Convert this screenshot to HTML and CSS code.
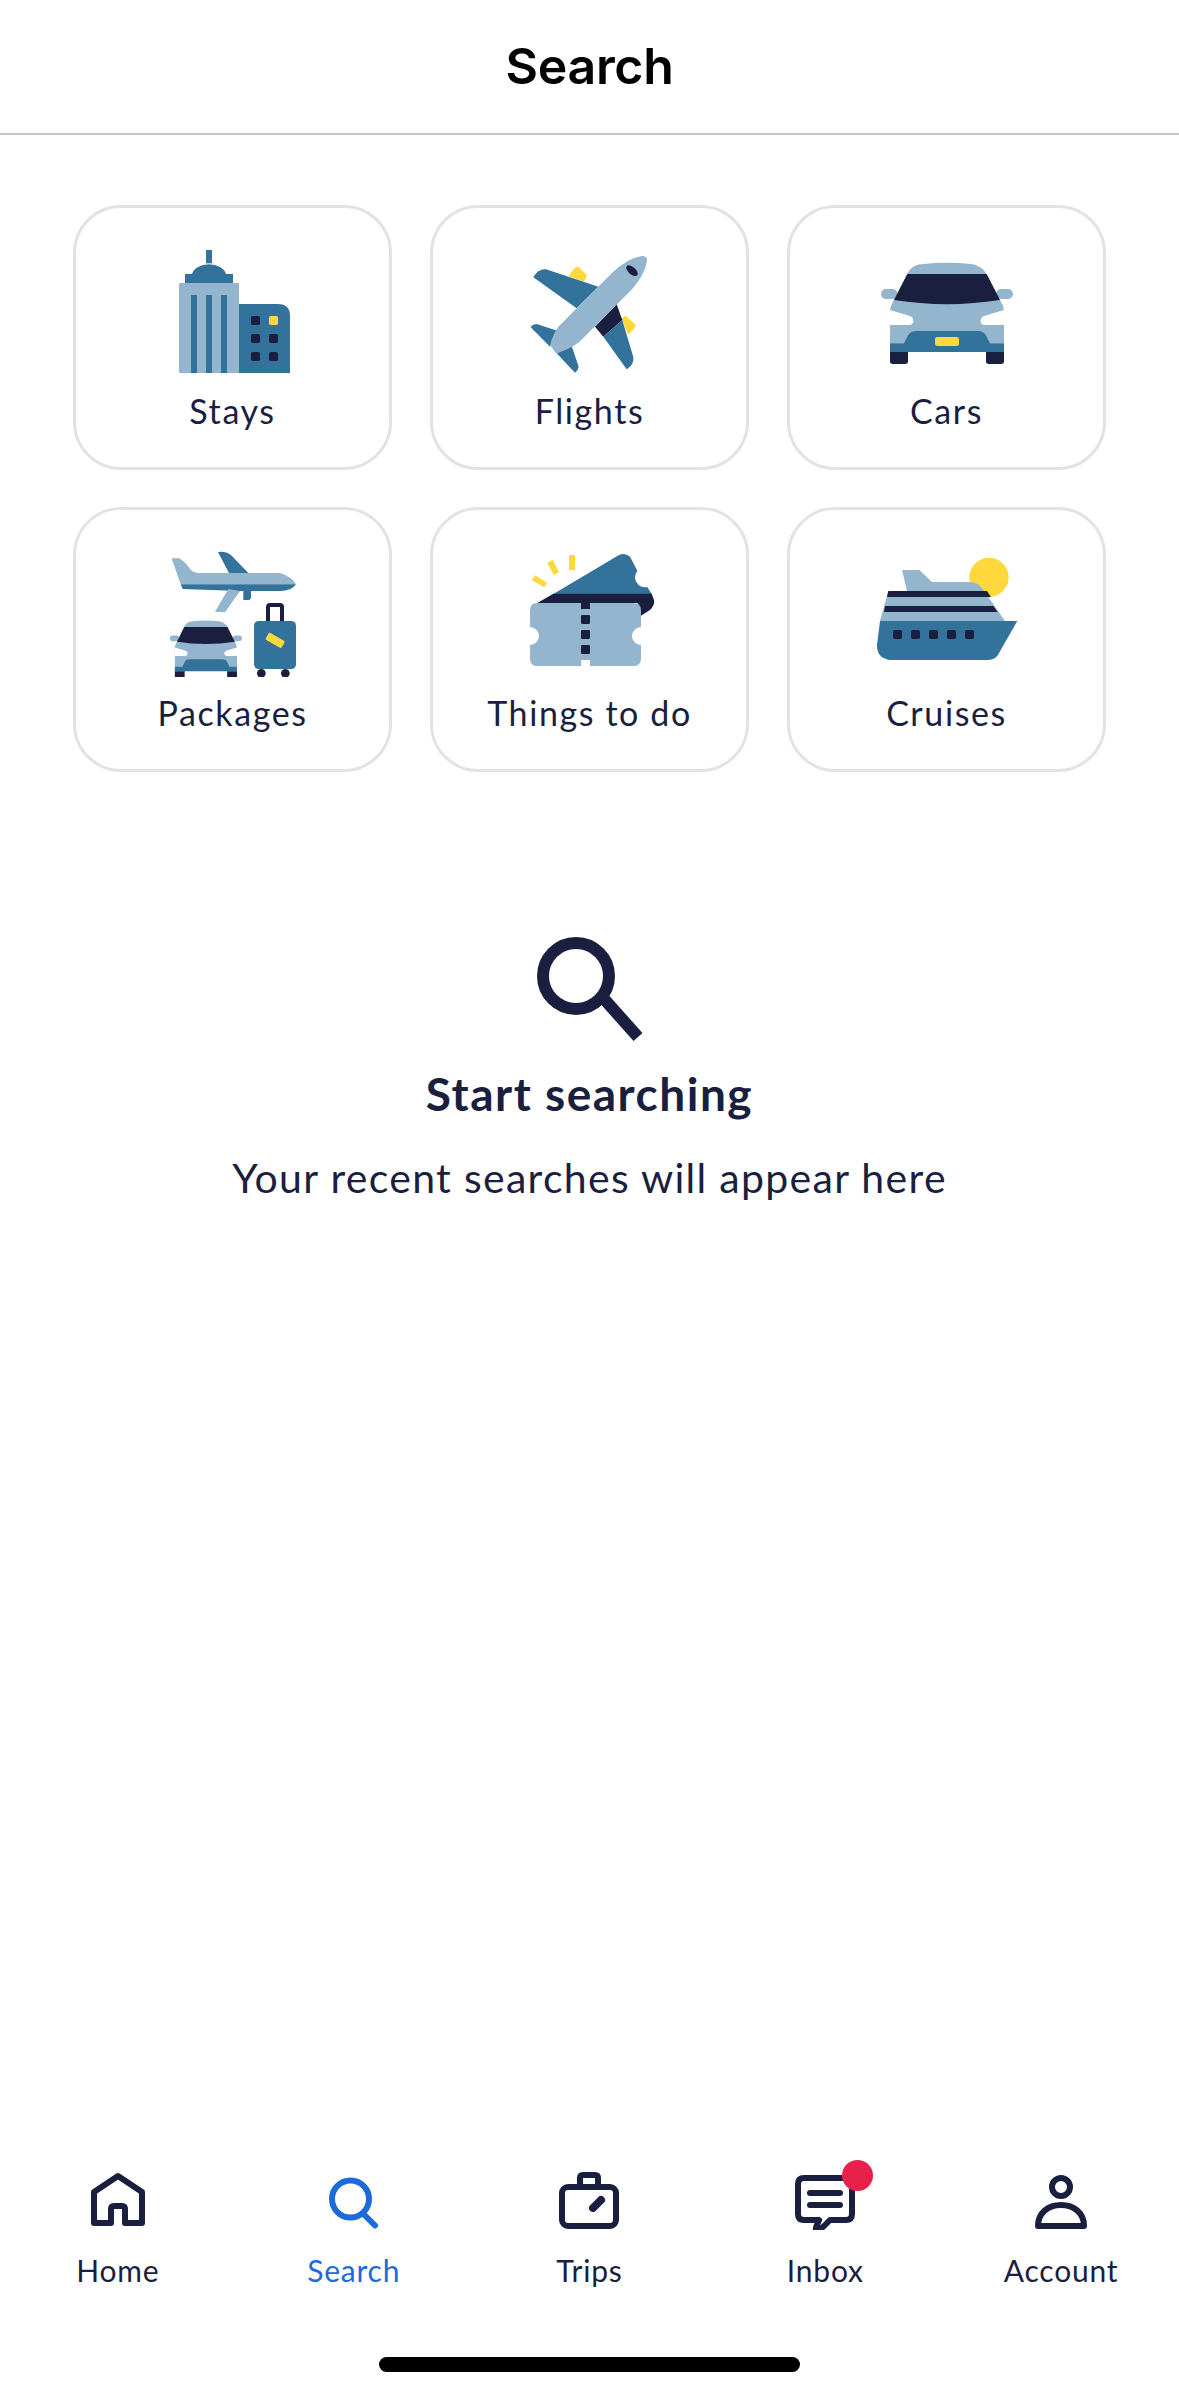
FILE: index.html
```html
<!DOCTYPE html>
<html lang="en">
<head>
  <meta charset="UTF-8">
  <title>Search</title>
  <link rel="stylesheet" href="styles.css">
</head>
<body>

  <header class="top-bar">
    <h1>Search</h1>
  </header>

  <div class="categories">
    <a class="card">
      <svg class="card-icon" viewBox="309 165 420 390">
        <path class="mid" d="M438 180h18v40h-18z"/>
        <path class="mid" d="M375 252h144v27H375zM396 252a52 36 0 0 1 102 0z"/>
        <path class="light" d="M357 279h180v270H357z"/>
        <path class="mid" d="M393 315h18v234h-18zM438 315h18v234h-18zM483 315h18v234h-18z"/>
        <path class="mid" d="M537 342h117q36 0 36 36v171H537z"/>
        <rect class="navy" x="573" y="378" width="27" height="27" rx="5"/>
        <rect class="sun" x="627" y="378" width="27" height="27" rx="5"/>
        <rect class="navy" x="573" y="432" width="27" height="27" rx="5"/>
        <rect class="navy" x="627" y="432" width="27" height="27" rx="5"/>
        <rect class="navy" x="573" y="486" width="27" height="27" rx="5"/>
        <rect class="navy" x="627" y="486" width="27" height="27" rx="5"/>
      </svg>
      <span>Stays</span>
    </a>

    <a class="card">
      <svg class="card-icon" viewBox="300 165 420 390">
        <path class="sun" d="M445 258l20-25q7-5 13 0l20 20q4 6 0 12l-8 10z"/>
        <path class="sun" d="M605 385l12-8 28 26q4 5 0 9l-20 23z"/>
        <path class="mid" d="M340 262q14-26 38-24l157 52-65 65z"/>
        <path class="navy" d="M590 343l17 47-57 50-25-30z"/>
        <path class="mid" d="M607 390l33 112q3 22-20 36L550 440z"/>
        <path class="mid" d="M332 412q6-12 20-9l60 19-22 48z"/>
        <path class="mid" d="M410 490l45-22 21 62q-1 11-11 18z"/>
        <path class="light" d="M390 465q10-35 25-55l160-160q45-45 90-52 17-1 16 14-6 40-45 86L478 456q-28 22-70 34z"/>
        <ellipse class="navy" cx="636" cy="242" rx="21" ry="11" transform="rotate(42 636 242)"/>
      </svg>
      <span>Flights</span>
    </a>

    <a class="card">
      <svg class="card-icon" viewBox="351 165 420 390">
        <g id="car">
          <rect class="light" x="363" y="297" width="50" height="30" rx="15"/>
          <rect class="light" x="709" y="297" width="50" height="30" rx="15"/>
          <path class="light" d="M402 330l43-85q15-23 45-23 71-7 142 0 28 3 43 23l45 85q10 15 12 30v100H390V360q2-15 12-30z"/>
          <path class="white" d="M390 360l60 18q12 6 10 17-2 10-15 10h-55zM732 360l-60 18q-12 6-10 17 2 10 15 10h55z"/>
          <path class="navy" d="M402 330l40-78h238l40 78q-159 25-318 0z"/>
          <path class="mid" d="M390 460h42l13-25q7-12 25-12h182q18 0 25 12l13 25h42v26H390z"/>
          <path class="navy" d="M390 486h54v28q0 8-8 8h-38q-8 0-8-8zM678 486h54v28q0 8-8 8h-38q-8 0-8-8z"/>
        </g>
        <rect class="sun" x="525" y="441" width="72" height="27" rx="7"/>
      </svg>
      <span>Cars</span>
    </a>

    <a class="card">
      <svg class="card-icon" viewBox="309 156 420 390">
        <path class="mid" d="M474 171q26-3 41 11l50 52-55 6z"/>
        <path class="mid" d="M550 285h23v20q0 10-10 10h-13z"/>
        <path class="light" d="M335 190h23q17 10 32 32 10 12 30 12h240q35 11 48 34H362z"/>
        <path class="mid" d="M362 268h346q-13 20-48 20H540l-172-6z"/>
        <path class="light" d="M505 282l35 6-45 64-30-2z"/>
        <use href="#car" transform="translate(132 252) scale(.545 .57)"/>
        <path class="no-fill navy-line" d="M624 382v-46q0-6 6-6h30q6 0 6 6v46"/>
        <rect class="mid" x="582" y="378" width="126" height="144" rx="14"/>
        <rect class="sun" x="618" y="424" width="55" height="24" rx="4" transform="rotate(30 645 436)"/>
        <circle class="navy" cx="604" cy="535" r="13"/>
        <circle class="navy" cx="676" cy="535" r="13"/>
      </svg>
      <span>Packages</span>
    </a>

    <a class="card">
      <svg class="card-icon" viewBox="300 156 420 390">
        <path class="sun" d="M447 180h18v45h-18zM382 203l16-9 19 38-16 8zM335 255l10-14 37 23-10 13z"/>
        <path class="mid" d="M400 297l197-117q18-8 33 5l22 42q-16 22 3 42 12 10 27 7l13 21z"/>
        <path class="navy" d="M352 324l48-28h295l7 19q3 15-12 30l-27 17-10-38z"/>
        <path class="light" d="M352 324h289q22 0 22 22v50a27 27 0 0 0 0 54v41q0 22-22 22H352q-22 0-22-22v-41a27 27 0 0 0 0-54v-50q0-22 22-22z"/>
        <path class="navy" d="M483 324h27v18h-27z"/>
        <rect class="navy" x="483" y="360" width="27" height="27" rx="4"/>
        <rect class="navy" x="483" y="405" width="27" height="27" rx="4"/>
        <rect class="navy" x="483" y="450" width="27" height="27" rx="4"/>
        <path class="white" d="M483 495h27v18h-27z"/>
      </svg>
      <span>Things to do</span>
    </a>

    <a class="card">
      <svg class="card-icon" viewBox="351 156 420 390">
        <circle class="sun" cx="687" cy="247" r="59"/>
        <path class="light" d="M426 225h52l38 36h114q25 1 38 21l67 96H360l25-90h56z"/>
        <path class="navy" d="M385 288h296l12 18H381zM375 333h325l13 18H372z"/>
        <path class="mid" d="M360 378h412l-57 100q-10 17-30 17H395q-45-3-44-45z"/>
        <rect class="navy" x="399" y="405" width="27" height="27" rx="5"/>
        <rect class="navy" x="453" y="405" width="27" height="27" rx="5"/>
        <rect class="navy" x="507" y="405" width="27" height="27" rx="5"/>
        <rect class="navy" x="561" y="405" width="27" height="27" rx="5"/>
        <rect class="navy" x="615" y="405" width="27" height="27" rx="5"/>
      </svg>
      <span>Cruises</span>
    </a>
  </div>

  <div class="empty-state">
    <svg class="empty-icon" viewBox="0 0 110 110">
      <circle cx="40" cy="40" r="33"/>
      <path d="M69 64l33 37"/>
    </svg>
    <h2>Start searching</h2>
    <p>Your recent searches will appear here</p>
  </div>

  <nav class="tabs">
    <a class="tab">
      <svg viewBox="0 0 60 60"><path d="M6 22L30 6l24 16v31H37V39q0-3-3-3h-8q-3 0-3 3v14H6z"/></svg>
      <span>Home</span>
    </a>
    <a class="tab active">
      <svg viewBox="0 0 60 60"><circle cx="26.5" cy="29" r="18.5"/><path d="M39.500 44L51 55.500"/></svg>
      <span>Search</span>
    </a>
    <a class="tab">
      <svg viewBox="0 0 60 60">
        <rect x="3" y="17" width="54" height="39" rx="6"/>
        <path d="M21 16V8q0-3 3-3h12q3 0 3 3v8"/>
        <path class="thick" d="M34 38l8-8"/>
      </svg>
      <span>Trips</span>
    </a>
    <a class="tab">
      <svg viewBox="0 0 60 60">
        <path d="M9 8h42q6 0 6 6v30q0 6-6 6H35l-6 6q-4 4-7 4-2 0-.5-4l2.500-6H9q-6 0-6-6V14q0-6 6-6z"/>
        <path d="M15 23h30M15 35h30"/>
      </svg>
      <span class="badge"></span>
      <span>Inbox</span>
    </a>
    <a class="tab">
      <svg viewBox="0 0 60 60">
        <circle cx="30" cy="17" r="9"/>
        <path d="M7 56c0-13 10-21 23-21s23 8 23 21z"/>
      </svg>
      <span>Account</span>
    </a>
  </nav>

  <div class="home-bar"></div>

</body>
</html>
```

FILE: styles.css
```css
* {
  box-sizing: border-box;
}
body {
  margin: 0;
  height: 2396px;
  display: flex;
  flex-direction: column;
  font-family: "Lato", "Liberation Sans", sans-serif;
  color: #1a1f40;
  background: #fff;
  overflow: hidden;
}

/* top bar */
.top-bar {
  height: 135px;
  flex: none;
  display: flex;
  align-items: center;
  justify-content: center;
  border-bottom: 2px solid #c4c4c4;
}
.top-bar h1 {
  margin: 0 0 2px;
  font-family: "Inter", "Liberation Sans", sans-serif;
  font-size: 50px;
  font-weight: 600;
  letter-spacing: -0.3px;
  color: #000;
}

/* category cards */
.categories {
  display: grid;
  grid-template-columns: repeat(3, 1fr);
  gap: 37px 38px;
  padding: 70px 73px 0;
}
.card {
  height: 265px;
  display: flex;
  flex-direction: column;
  align-items: center;
  padding-top: 37px;
  border: 3px solid #e3e3e3;
  border-radius: 48px;
  font-size: 34px;
  letter-spacing: 1.6px;
}
.card-icon {
  width: 140px;
  height: 130px;
  flex: none;
  display: block;
}
.card span {
  line-height: 40px;
  margin-top: 16px;
}
.light { fill: #94b5ce; }
.mid { fill: #33729b; }
.navy { fill: #1a1f40; }
.sun { fill: #ffd93b; }
.white { fill: #fff; }
.no-fill { fill: none; }
.navy-line {
  stroke: #1a1f40;
  stroke-width: 12;
}

/* empty state */
.empty-state {
  display: flex;
  flex-direction: column;
  align-items: center;
  padding-top: 164px;
}
.empty-icon {
  width: 110px;
  height: 110px;
  margin-left: 3px;
  fill: none;
  stroke: #1a1f40;
  stroke-width: 12;
}
.empty-state h2 {
  margin: 20px 0 0;
  font-size: 46px;
  line-height: 56px;
  font-weight: 700;
  letter-spacing: 1.5px;
}
.empty-state p {
  margin: 31px 0 0;
  font-size: 41px;
  line-height: 50px;
  letter-spacing: 1.3px;
}

/* bottom tabs */
.tabs {
  margin-top: auto;
  display: grid;
  grid-template-columns: repeat(5, 1fr);
}
.tab {
  position: relative;
  display: flex;
  flex-direction: column;
  align-items: center;
  font-size: 30px;
  line-height: 36px;
  letter-spacing: 0.8px;
}
.tab svg {
  width: 60px;
  height: 60px;
  fill: none;
  stroke: currentColor;
  stroke-width: 6;
  stroke-linecap: round;
  stroke-linejoin: round;
  margin-bottom: 22px;
}
.tab .thick {
  stroke-width: 8;
}
.tab.active {
  color: #1b6bdb;
}
.badge {
  position: absolute;
  top: -10px;
  left: 50%;
  margin-left: 17px;
  width: 31px;
  height: 31px;
  border-radius: 50%;
  background: #e8214a;
}

.home-bar {
  flex: none;
  width: 421px;
  height: 15px;
  margin: 69px auto 24px;
  border-radius: 8px;
  background: #000;
}
```
